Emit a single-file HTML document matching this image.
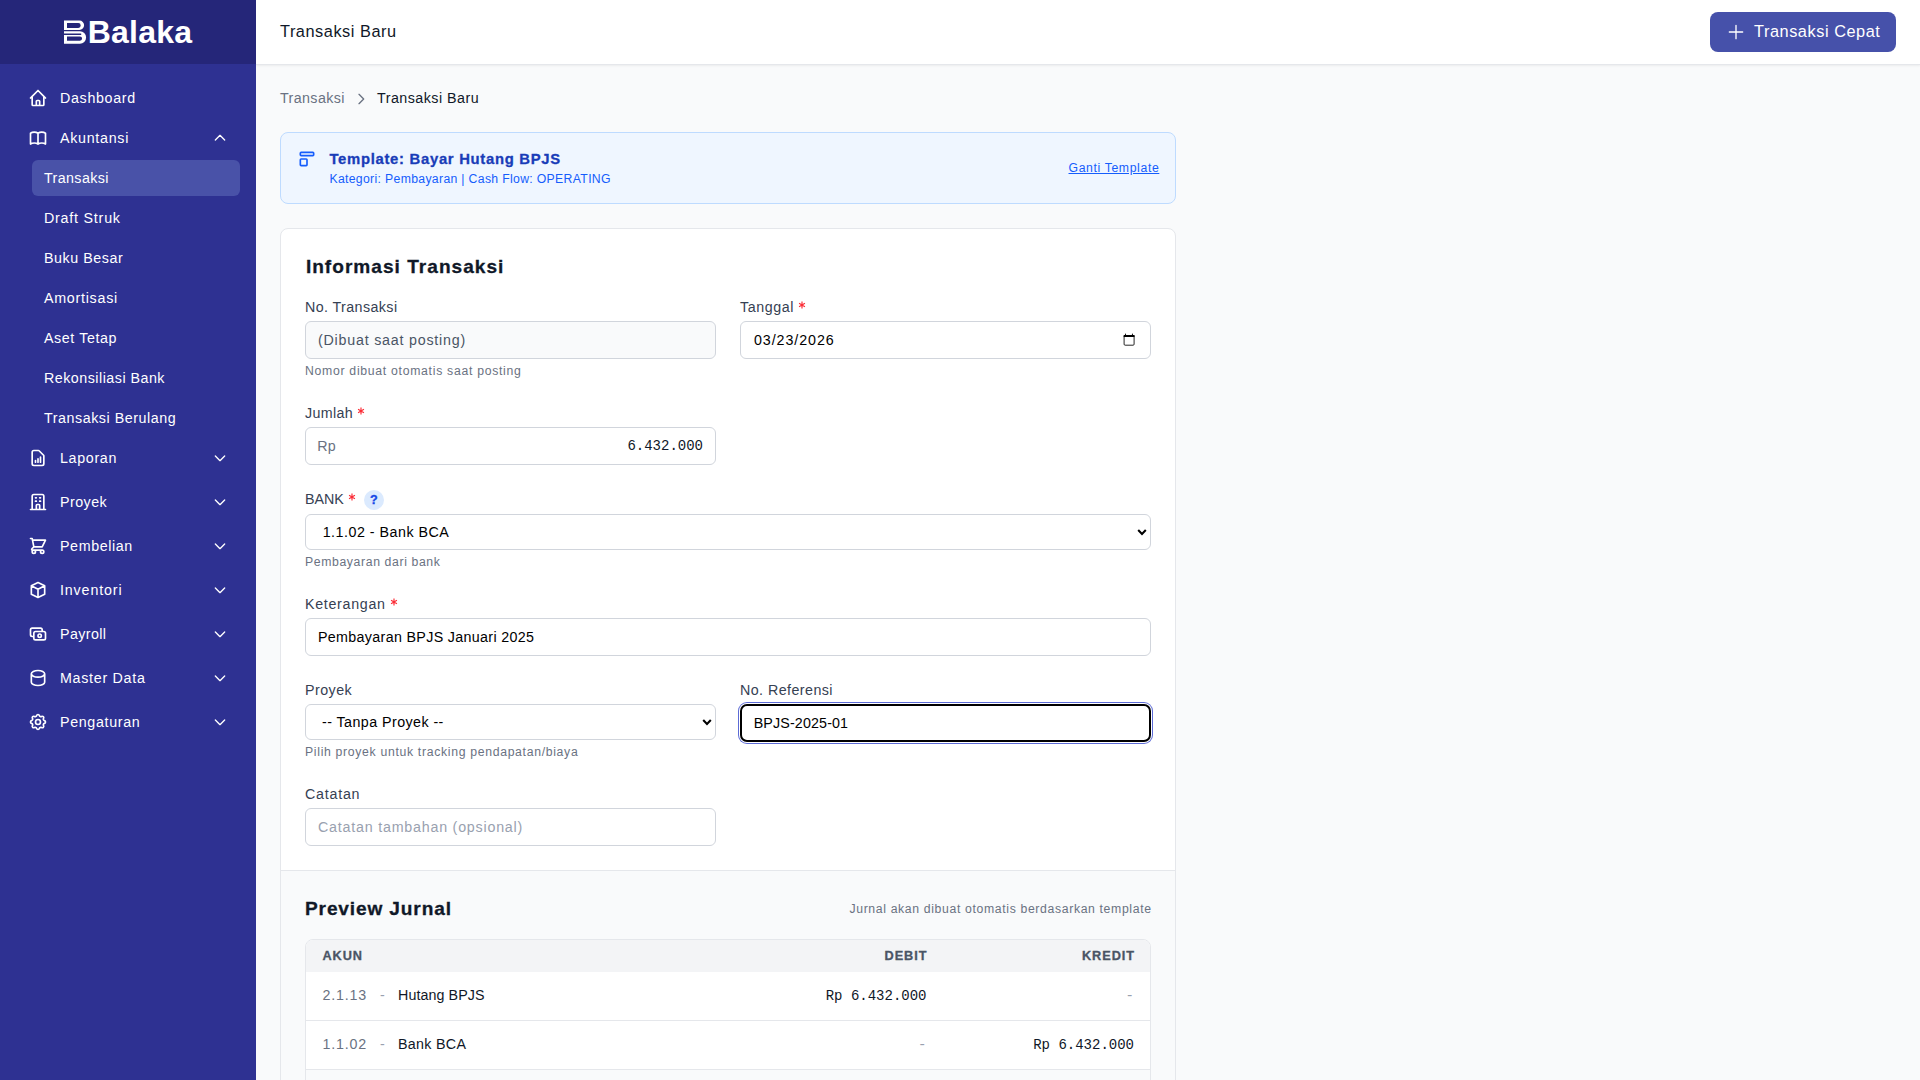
<!DOCTYPE html>
<html><head><meta charset="utf-8"><title>Transaksi Baru</title>
<style>
html,body{margin:0;padding:0;width:1920px;height:1080px;overflow:hidden;background:#f9fafb;}
body{position:relative;font-family:'Liberation Sans',sans-serif;}
.t{position:absolute;white-space:nowrap;}
.r{position:absolute;}
</style></head><body>
<div class="r" style="left:0px;top:0px;width:1920px;height:1080px;background:#f9fafb;"></div>
<div class="r" style="left:256px;top:0px;width:1664px;height:65px;background:#fff;border-bottom:1px solid #e5e7eb;box-sizing:border-box;box-shadow:0 1px 2px 0 rgba(0,0,0,0.06);"></div>
<div class="r" style="left:0px;top:0px;width:256px;height:1080px;background:#2e3192;"></div>
<div class="r" style="left:0px;top:0px;width:256px;height:64px;background:#252679;"></div>
<svg class="r" style="left:0;top:0" width="100" height="64" viewBox="0 0 100 64"><path fill="#fff" fill-rule="evenodd" d="M64 20.6H79.45A4.65 4.65 0 0 1 79.45 29.9H64Z M67 23.1H78.3A2.4 2.4 0 0 1 78.3 27.9H67Z M64 31.3H79.9A6.2 6.2 0 0 1 79.9 43.7H64Z M67 36.5H80A2.1 2.1 0 0 1 80 40.7H67Z M64 33.6H81.2V35H64Z"/></svg>
<div class="t" style="top:7.81px;font-size:32.00px;line-height:48px;color:#fff;letter-spacing:0.220px;font-weight:700;left:87.70px;">Balaka</div>
<div class="r" style="left:32px;top:160px;width:208px;height:36px;background:#4952a8;border-radius:6px;"></div>
<svg class="r" style="left:28px;top:88px;" width="20" height="20" viewBox="0 0 24 24" fill="none" stroke="#ffffff" stroke-width="2" stroke-linecap="round" stroke-linejoin="round"><path d="M3 12l2-2m0 0l7-7 7 7M5 10v10a1 1 0 001 1h3m10-11l2 2m-2-2v10a1 1 0 01-1 1h-3m-6 0a1 1 0 001-1v-4a1 1 0 011-1h2a1 1 0 011 1v4a1 1 0 001 1m-6 0h6"/></svg>
<div class="t" style="top:87.75px;font-size:14.28px;line-height:21px;color:#ffffff;letter-spacing:0.677px;left:60.00px;">Dashboard</div>
<svg class="r" style="left:28px;top:128px;" width="20" height="20" viewBox="0 0 24 24" fill="none" stroke="#ffffff" stroke-width="2" stroke-linecap="round" stroke-linejoin="round"><path d="M12 6.253v13m0-13C10.832 5.477 9.246 5 7.5 5S4.168 5.477 3 6.253v13C4.168 18.477 5.754 18 7.5 18s3.332.477 4.5 1.253m0-13C13.168 5.477 14.754 5 16.5 5c1.747 0 3.332.477 4.5 1.253v13C19.832 18.477 18.247 18 16.5 18c-1.746 0-3.332.477-4.5 1.253"/></svg>
<div class="t" style="top:127.75px;font-size:14.28px;line-height:21px;color:#ffffff;letter-spacing:0.713px;left:60.00px;">Akuntansi</div>
<svg class="r" style="left:212px;top:130px;" width="16" height="16" viewBox="0 0 24 24" fill="none" stroke="#ffffff" stroke-width="2" stroke-linecap="round" stroke-linejoin="round"><path d="M5 15l7-7 7 7"/></svg>
<svg class="r" style="left:28px;top:448px;" width="20" height="20" viewBox="0 0 24 24" fill="none" stroke="#ffffff" stroke-width="2" stroke-linecap="round" stroke-linejoin="round"><path d="M9 17v-2m3 2v-4m3 4v-6m2 10H7a2 2 0 01-2-2V5a2 2 0 012-2h5.586a1 1 0 01.707.293l5.414 5.414a1 1 0 01.293.707V19a2 2 0 01-2 2z"/></svg>
<div class="t" style="top:447.75px;font-size:14.28px;line-height:21px;color:#ffffff;letter-spacing:0.662px;left:60.00px;">Laporan</div>
<svg class="r" style="left:212px;top:450px;" width="16" height="16" viewBox="0 0 24 24" fill="none" stroke="#ffffff" stroke-width="2" stroke-linecap="round" stroke-linejoin="round"><path d="M19 9l-7 7-7-7"/></svg>
<svg class="r" style="left:28px;top:492px;" width="20" height="20" viewBox="0 0 24 24" fill="none" stroke="#ffffff" stroke-width="2" stroke-linecap="round" stroke-linejoin="round"><path d="M19 21V5a2 2 0 00-2-2H7a2 2 0 00-2 2v16m14 0h2m-2 0h-5m-9 0H3m2 0h5M9 7h1m-1 4h1m4-4h1m-1 4h1m-5 10v-5a1 1 0 011-1h2a1 1 0 011 1v5m-4 0h4"/></svg>
<div class="t" style="top:491.75px;font-size:14.28px;line-height:21px;color:#ffffff;letter-spacing:0.462px;left:60.00px;">Proyek</div>
<svg class="r" style="left:212px;top:494px;" width="16" height="16" viewBox="0 0 24 24" fill="none" stroke="#ffffff" stroke-width="2" stroke-linecap="round" stroke-linejoin="round"><path d="M19 9l-7 7-7-7"/></svg>
<svg class="r" style="left:28px;top:536px;" width="20" height="20" viewBox="0 0 24 24" fill="none" stroke="#ffffff" stroke-width="2" stroke-linecap="round" stroke-linejoin="round"><path d="M3 3h2l.4 2M7 13h10l4-8H5.4M7 13L5.4 5M7 13l-2.293 2.293c-.63.63-.184 1.707.707 1.707H17m0 0a2 2 0 100 4 2 2 0 000-4zm-8 2a2 2 0 11-4 0 2 2 0 014 0z"/></svg>
<div class="t" style="top:535.75px;font-size:14.28px;line-height:21px;color:#ffffff;letter-spacing:0.606px;left:60.00px;">Pembelian</div>
<svg class="r" style="left:212px;top:538px;" width="16" height="16" viewBox="0 0 24 24" fill="none" stroke="#ffffff" stroke-width="2" stroke-linecap="round" stroke-linejoin="round"><path d="M19 9l-7 7-7-7"/></svg>
<svg class="r" style="left:28px;top:580px;" width="20" height="20" viewBox="0 0 24 24" fill="none" stroke="#ffffff" stroke-width="2" stroke-linecap="round" stroke-linejoin="round"><path d="M20 7l-8-4-8 4m16 0l-8 4m8-4v10l-8 4m0-10L4 7m8 4v10M4 7v10l8 4"/></svg>
<div class="t" style="top:579.75px;font-size:14.28px;line-height:21px;color:#ffffff;letter-spacing:0.856px;left:60.00px;">Inventori</div>
<svg class="r" style="left:212px;top:582px;" width="16" height="16" viewBox="0 0 24 24" fill="none" stroke="#ffffff" stroke-width="2" stroke-linecap="round" stroke-linejoin="round"><path d="M19 9l-7 7-7-7"/></svg>
<svg class="r" style="left:28px;top:624px;" width="20" height="20" viewBox="0 0 24 24" fill="none" stroke="#ffffff" stroke-width="2" stroke-linecap="round" stroke-linejoin="round"><path d="M17 9V7a2 2 0 00-2-2H5a2 2 0 00-2 2v6a2 2 0 002 2h2m2 4h10a2 2 0 002-2v-6a2 2 0 00-2-2H9a2 2 0 00-2 2v6a2 2 0 002 2zm7-5a2 2 0 11-4 0 2 2 0 014 0z"/></svg>
<div class="t" style="top:623.75px;font-size:14.28px;line-height:21px;color:#ffffff;letter-spacing:0.403px;left:60.00px;">Payroll</div>
<svg class="r" style="left:212px;top:626px;" width="16" height="16" viewBox="0 0 24 24" fill="none" stroke="#ffffff" stroke-width="2" stroke-linecap="round" stroke-linejoin="round"><path d="M19 9l-7 7-7-7"/></svg>
<svg class="r" style="left:28px;top:668px;" width="20" height="20" viewBox="0 0 24 24" fill="none" stroke="#ffffff" stroke-width="2" stroke-linecap="round" stroke-linejoin="round"><path d="M4 7v10c0 2.21 3.582 4 8 4s8-1.79 8-4V7M4 7c0 2.21 3.582 4 8 4s8-1.79 8-4M4 7c0-2.21 3.582-4 8-4s8 1.79 8 4"/></svg>
<div class="t" style="top:667.75px;font-size:14.28px;line-height:21px;color:#ffffff;letter-spacing:0.720px;left:60.00px;">Master Data</div>
<svg class="r" style="left:212px;top:670px;" width="16" height="16" viewBox="0 0 24 24" fill="none" stroke="#ffffff" stroke-width="2" stroke-linecap="round" stroke-linejoin="round"><path d="M19 9l-7 7-7-7"/></svg>
<svg class="r" style="left:28px;top:712px;" width="20" height="20" viewBox="0 0 24 24" fill="none" stroke="#ffffff" stroke-width="2" stroke-linecap="round" stroke-linejoin="round"><path d="M10.325 4.317c.426-1.756 2.924-1.756 3.35 0a1.724 1.724 0 002.573 1.066c1.543-.94 3.31.826 2.37 2.37a1.724 1.724 0 001.065 2.572c1.756.426 1.756 2.924 0 3.35a1.724 1.724 0 00-1.066 2.573c.94 1.543-.826 3.31-2.37 2.37a1.724 1.724 0 00-2.572 1.065c-.426 1.756-2.924 1.756-3.35 0a1.724 1.724 0 00-2.573-1.066c-1.543.94-3.31-.826-2.37-2.37a1.724 1.724 0 00-1.065-2.572c-1.756-.426-1.756-2.924 0-3.35a1.724 1.724 0 001.066-2.573c-.94-1.543.826-3.31 2.37-2.37.996.608 2.296.07 2.572-1.065z"/><path d="M15 12a3 3 0 11-6 0 3 3 0 016 0z"/></svg>
<div class="t" style="top:711.75px;font-size:14.28px;line-height:21px;color:#ffffff;letter-spacing:0.663px;left:60.00px;">Pengaturan</div>
<svg class="r" style="left:212px;top:714px;" width="16" height="16" viewBox="0 0 24 24" fill="none" stroke="#ffffff" stroke-width="2" stroke-linecap="round" stroke-linejoin="round"><path d="M19 9l-7 7-7-7"/></svg>
<div class="t" style="top:167.55px;font-size:14.28px;line-height:21px;color:#ffffff;letter-spacing:0.389px;left:44.00px;">Transaksi</div>
<div class="t" style="top:207.55px;font-size:14.28px;line-height:21px;color:#ffffff;letter-spacing:0.783px;left:44.00px;">Draft Struk</div>
<div class="t" style="top:247.55px;font-size:14.28px;line-height:21px;color:#ffffff;letter-spacing:0.550px;left:44.00px;">Buku Besar</div>
<div class="t" style="top:287.55px;font-size:14.28px;line-height:21px;color:#ffffff;letter-spacing:0.732px;left:44.00px;">Amortisasi</div>
<div class="t" style="top:327.55px;font-size:14.28px;line-height:21px;color:#ffffff;letter-spacing:0.595px;left:44.00px;">Aset Tetap</div>
<div class="t" style="top:367.55px;font-size:14.28px;line-height:21px;color:#ffffff;letter-spacing:0.494px;left:44.00px;">Rekonsiliasi Bank</div>
<div class="t" style="top:407.55px;font-size:14.28px;line-height:21px;color:#ffffff;letter-spacing:0.550px;left:44.00px;">Transaksi Berulang</div>
<div class="t" style="top:19.15px;font-size:16.32px;line-height:24px;color:#101828;letter-spacing:0.541px;left:280.00px;">Transaksi Baru</div>
<div class="r" style="left:1710px;top:12px;width:186px;height:40px;background:#4651aa;border-radius:8px;"></div>
<svg class="r" style="left:1726px;top:22px;" width="20" height="20" viewBox="0 0 24 24" fill="none" stroke="#fff" stroke-width="1.6" stroke-linecap="round" stroke-linejoin="round"><path d="M12 4v16m8-8H4"/></svg>
<div class="t" style="top:18.85px;font-size:16.32px;line-height:24px;color:#fff;letter-spacing:0.550px;left:1754.00px;">Transaksi Cepat</div>
<div class="t" style="top:87.55px;font-size:14.28px;line-height:21px;color:#6a7282;letter-spacing:0.389px;left:280.00px;">Transaksi</div>
<svg class="r" style="left:353px;top:91px;" width="16" height="16" viewBox="0 0 24 24" fill="none" stroke="#6a7282" stroke-width="2" stroke-linecap="round" stroke-linejoin="round"><path d="M9 5l7 7-7 7"/></svg>
<div class="t" style="top:87.55px;font-size:14.28px;line-height:21px;color:#101828;letter-spacing:0.474px;left:377.00px;">Transaksi Baru</div>
<div class="r" style="left:280px;top:132px;width:896px;height:72px;background:#eff6ff;border:1px solid #bedbff;border-radius:8px;box-sizing:border-box;"></div>
<svg class="r" style="left:296.5px;top:148.5px;" width="20" height="20" viewBox="0 0 24 24" fill="none" stroke="#155dfc" stroke-width="2" stroke-linecap="round" stroke-linejoin="round"><path d="M4 5a1 1 0 011-1h14a1 1 0 011 1v2a1 1 0 01-1 1H5a1 1 0 01-1-1V5z"/><path d="M4 13a1 1 0 011-1h6a1 1 0 011 1v6a1 1 0 01-1 1H5a1 1 0 01-1-1v-6z"/></svg>
<div class="t" style="top:148.96px;font-size:14.84px;line-height:21px;color:#193cb8;letter-spacing:0.710px;font-weight:700;-webkit-text-stroke:0.3px currentColor;left:329.40px;">Template: Bayar Hutang BPJS</div>
<div class="t" style="top:169.76px;font-size:12.24px;line-height:18px;color:#155dfc;letter-spacing:0.326px;left:329.40px;">Kategori: Pembayaran | Cash Flow: OPERATING</div>
<div class="t" style="top:159.36px;font-size:12.24px;line-height:18px;color:#155dfc;letter-spacing:0.626px;right:760.67px;text-decoration:underline;">Ganti Template</div>
<div class="r" style="left:280px;top:228px;width:896px;height:872px;background:#fff;border:1px solid #e5e7eb;border-radius:8px;box-sizing:border-box;"></div>
<div class="r" style="left:281px;top:870px;width:894px;height:230px;background:#f9fafb;border-top:1px solid #e5e7eb;box-sizing:border-box;"></div>
<div class="t" style="top:252.89px;font-size:19.08px;line-height:27px;color:#101828;letter-spacing:1.014px;font-weight:700;-webkit-text-stroke:0.3px currentColor;left:305.90px;">Informasi Transaksi</div>
<div class="t" style="top:296.55px;font-size:14.28px;line-height:21px;color:#364153;letter-spacing:0.405px;left:305.00px;">No. Transaksi</div>
<div class="r" style="left:305px;top:321px;width:411px;height:38px;background:#f9fafb;border:1px solid #d1d5dc;border-radius:6px;box-sizing:border-box;"></div>
<div class="t" style="top:329.55px;font-size:14.28px;line-height:21px;color:#4a5565;letter-spacing:0.780px;left:318.00px;">(Dibuat saat posting)</div>
<div class="t" style="top:361.76px;font-size:12.24px;line-height:18px;color:#6a7282;letter-spacing:0.709px;left:305.00px;">Nomor dibuat otomatis saat posting</div>
<div class="t" style="top:296.55px;font-size:14.28px;line-height:21px;color:#364153;letter-spacing:0.558px;left:740.00px;">Tanggal</div>
<svg class="r" style="left:796.88px;top:300.10px" width="10" height="10" viewBox="-5 -5 10 10" stroke="#fb2c36" stroke-width="1.15"><path d="M0 -3.4V3.4M-2.95 -1.7L2.95 1.7M-2.95 1.7L2.95 -1.7"/></svg>
<div class="r" style="left:740px;top:321px;width:411px;height:38px;background:#fff;border:1px solid #d1d5dc;border-radius:6px;box-sizing:border-box;"></div>
<div class="t" style="top:329.55px;font-size:14.28px;line-height:21px;color:#000;letter-spacing:0.922px;left:754.00px;">03/23/2026</div>
<svg class="r" style="left:1120px;top:330px" width="16" height="16" viewBox="0 0 16 16"><rect x="4.1" y="5.6" width="10" height="9.6" rx="1" fill="none" stroke="#000" stroke-width="1" opacity="0.85"/><rect x="3.6" y="5.1" width="11" height="2" rx="0.5" fill="#000"/><path d="M4.8 5.3L5.5 3L6.2 5.3ZM11.7 5.3L12.4 3L13.1 5.3Z" fill="#000"/></svg>
<div class="t" style="top:402.55px;font-size:14.28px;line-height:21px;color:#364153;letter-spacing:0.325px;left:305.00px;">Jumlah</div>
<svg class="r" style="left:355.93px;top:406.10px" width="10" height="10" viewBox="-5 -5 10 10" stroke="#fb2c36" stroke-width="1.15"><path d="M0 -3.4V3.4M-2.95 -1.7L2.95 1.7M-2.95 1.7L2.95 -1.7"/></svg>
<div class="r" style="left:305px;top:427px;width:411px;height:38px;background:#fff;border:1px solid #d1d5dc;border-radius:6px;box-sizing:border-box;"></div>
<div class="t" style="top:435.55px;font-size:14.28px;line-height:21px;color:#6a7282;letter-spacing:0.180px;left:317.30px;">Rp</div>
<div class="t" style="top:435.97px;font-size:14.00px;line-height:21px;color:#101828;letter-spacing:0.000px;font-family:'Liberation Mono', monospace;right:1217.00px;">6.432.000</div>
<div class="t" style="top:488.75px;font-size:14.28px;line-height:21px;color:#364153;letter-spacing:-0.013px;left:305.00px;">BANK</div>
<svg class="r" style="left:346.79px;top:492.30px" width="10" height="10" viewBox="-5 -5 10 10" stroke="#fb2c36" stroke-width="1.15"><path d="M0 -3.4V3.4M-2.95 -1.7L2.95 1.7M-2.95 1.7L2.95 -1.7"/></svg>
<div class="r" style="left:364px;top:490px;width:20px;height:20px;background:#dbeafe;border-radius:10px;"></div>
<div class="t" style="top:490.93px;font-size:12.60px;line-height:18px;color:#1447e6;letter-spacing:0.000px;font-weight:700;-webkit-text-stroke:0.3px currentColor;left:373.80px;width:20px;margin-left:-10px;text-align:center;">?</div>
<div class="r" style="left:305px;top:514px;width:846px;height:36px;background:#fff;border:1px solid #d1d5dc;border-radius:6px;box-sizing:border-box;"></div>
<div class="t" style="top:521.55px;font-size:14.28px;line-height:21px;color:#000;letter-spacing:0.502px;left:322.70px;">1.1.02 - Bank BCA</div>
<svg class="r" style="left:1136px;top:526px" width="12" height="12" viewBox="0 0 12 12" fill="none" stroke="#000" stroke-width="2.1"><path d="M2.2 4.1L6 7.9L9.8 4.1"/></svg>
<div class="t" style="top:552.76px;font-size:12.24px;line-height:18px;color:#6a7282;letter-spacing:0.622px;left:305.00px;">Pembayaran dari bank</div>
<div class="t" style="top:593.75px;font-size:14.28px;line-height:21px;color:#364153;letter-spacing:0.691px;left:305.00px;">Keterangan</div>
<svg class="r" style="left:388.70px;top:597.30px" width="10" height="10" viewBox="-5 -5 10 10" stroke="#fb2c36" stroke-width="1.15"><path d="M0 -3.4V3.4M-2.95 -1.7L2.95 1.7M-2.95 1.7L2.95 -1.7"/></svg>
<div class="r" style="left:305px;top:618px;width:846px;height:38px;background:#fff;border:1px solid #d1d5dc;border-radius:6px;box-sizing:border-box;"></div>
<div class="t" style="top:626.55px;font-size:14.28px;line-height:21px;color:#000;letter-spacing:0.331px;left:318.00px;">Pembayaran BPJS Januari 2025</div>
<div class="t" style="top:679.55px;font-size:14.28px;line-height:21px;color:#364153;letter-spacing:0.462px;left:305.00px;">Proyek</div>
<div class="r" style="left:305px;top:704px;width:411px;height:36px;background:#fff;border:1px solid #d1d5dc;border-radius:6px;box-sizing:border-box;"></div>
<div class="t" style="top:711.55px;font-size:14.28px;line-height:21px;color:#000;letter-spacing:0.439px;left:322.00px;">-- Tanpa Proyek --</div>
<svg class="r" style="left:701px;top:716px" width="12" height="12" viewBox="0 0 12 12" fill="none" stroke="#000" stroke-width="2.1"><path d="M2.2 4.1L6 7.9L9.8 4.1"/></svg>
<div class="t" style="top:742.76px;font-size:12.24px;line-height:18px;color:#6a7282;letter-spacing:0.679px;left:305.00px;">Pilih proyek untuk tracking pendapatan/biaya</div>
<div class="t" style="top:679.55px;font-size:14.28px;line-height:21px;color:#364153;letter-spacing:0.443px;left:740.00px;">No. Referensi</div>
<div class="r" style="left:740px;top:704px;width:411px;height:38px;background:#fff;border:2px solid #000;border-radius:7px;box-sizing:border-box;box-shadow:0 0 0 1px #fff,0 0 0 2px #5c6bd6;"></div>
<div class="t" style="top:712.55px;font-size:14.28px;line-height:21px;color:#000;letter-spacing:0.144px;left:753.70px;">BPJS-2025-01</div>
<div class="t" style="top:783.75px;font-size:14.28px;line-height:21px;color:#364153;letter-spacing:0.764px;left:305.00px;">Catatan</div>
<div class="r" style="left:305px;top:808px;width:411px;height:38px;background:#fff;border:1px solid #d1d5dc;border-radius:6px;box-sizing:border-box;"></div>
<div class="t" style="top:816.55px;font-size:14.28px;line-height:21px;color:#99a1af;letter-spacing:0.780px;left:318.00px;">Catatan tambahan (opsional)</div>
<div class="t" style="top:894.89px;font-size:19.08px;line-height:27px;color:#101828;letter-spacing:0.866px;font-weight:700;-webkit-text-stroke:0.3px currentColor;left:305.00px;">Preview Jurnal</div>
<div class="t" style="top:899.76px;font-size:12.24px;line-height:18px;color:#6a7282;letter-spacing:0.643px;right:768.36px;">Jurnal akan dibuat otomatis berdasarkan template</div>
<div class="r" style="left:305px;top:939px;width:846px;height:161px;background:#fff;border:1px solid #e5e7eb;border-radius:8px;box-sizing:border-box;overflow:hidden;"></div>
<div class="r" style="left:306px;top:940px;width:844px;height:32px;background:#f3f4f6;border-radius:7px 7px 0 0;"></div>
<div class="t" style="top:946.79px;font-size:12.72px;line-height:18px;color:#4a5565;letter-spacing:0.955px;font-weight:700;-webkit-text-stroke:0.3px currentColor;left:322.40px;">AKUN</div>
<div class="t" style="top:946.79px;font-size:12.72px;line-height:18px;color:#4a5565;letter-spacing:0.959px;font-weight:700;-webkit-text-stroke:0.3px currentColor;right:992.54px;">DEBIT</div>
<div class="t" style="top:946.79px;font-size:12.72px;line-height:18px;color:#4a5565;letter-spacing:0.934px;font-weight:700;-webkit-text-stroke:0.3px currentColor;right:785.07px;">KREDIT</div>
<div class="r" style="left:306px;top:1020px;width:844px;height:1px;background:#e5e7eb;"></div>
<div class="r" style="left:306px;top:1069px;width:844px;height:1px;background:#e5e7eb;"></div>
<div class="r" style="left:306px;top:1070px;width:844px;height:30px;background:#f9fafb;"></div>
<div class="t" style="top:985.35px;font-size:14.28px;line-height:21px;color:#6a7282;letter-spacing:0.805px;left:322.40px;">2.1.13</div>
<div class="t" style="top:985.35px;font-size:14.28px;line-height:21px;color:#99a1af;letter-spacing:0.296px;left:380.00px;">-</div>
<div class="t" style="top:985.35px;font-size:14.28px;line-height:21px;color:#101828;letter-spacing:0.092px;left:398.00px;">Hutang BPJS</div>
<div class="t" style="top:986.17px;font-size:14.00px;line-height:21px;color:#101828;letter-spacing:0.000px;font-family:'Liberation Mono', monospace;right:993.50px;">Rp 6.432.000</div>
<div class="t" style="top:986.17px;font-size:14.00px;line-height:21px;color:#99a1af;letter-spacing:0.000px;font-family:'Liberation Mono', monospace;right:786.00px;">-</div>
<div class="t" style="top:1034.15px;font-size:14.28px;line-height:21px;color:#6a7282;letter-spacing:0.805px;left:322.40px;">1.1.02</div>
<div class="t" style="top:1034.15px;font-size:14.28px;line-height:21px;color:#99a1af;letter-spacing:0.296px;left:380.00px;">-</div>
<div class="t" style="top:1034.15px;font-size:14.28px;line-height:21px;color:#101828;letter-spacing:0.306px;left:398.00px;">Bank BCA</div>
<div class="t" style="top:1034.97px;font-size:14.00px;line-height:21px;color:#99a1af;letter-spacing:0.000px;font-family:'Liberation Mono', monospace;right:993.50px;">-</div>
<div class="t" style="top:1034.97px;font-size:14.00px;line-height:21px;color:#101828;letter-spacing:0.000px;font-family:'Liberation Mono', monospace;right:786.00px;">Rp 6.432.000</div>
</body></html>
